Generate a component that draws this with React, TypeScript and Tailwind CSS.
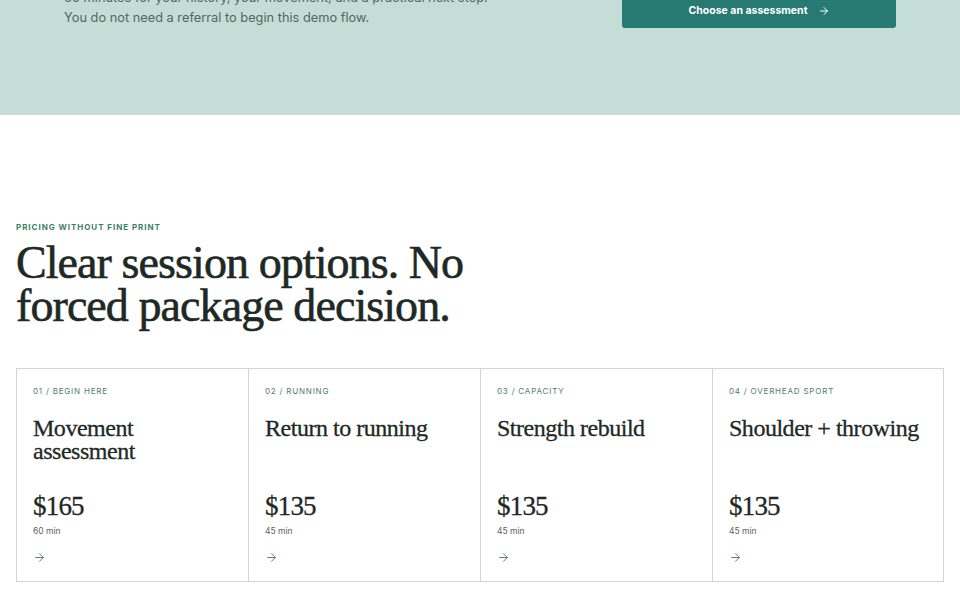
import { ArrowRight } from 'lucide-react';

const plans = [
    { tag: '01 / BEGIN HERE', title: 'Movement assessment', price: '$165', time: '60 min' },
    { tag: '02 / RUNNING', title: 'Return to running', price: '$135', time: '45 min' },
    { tag: '03 / CAPACITY', title: 'Strength rebuild', price: '$135', time: '45 min' },
    { tag: '04 / OVERHEAD SPORT', title: 'Shoulder + throwing', price: '$135', time: '45 min' },
];

const serif = { fontFamily: '"Liberation Serif", "DejaVu Serif", serif' };

export default function App() {
    return (
        <div className="w-[960px] h-[600px] overflow-hidden bg-white text-[#1f2a27]" style={{ fontFamily: 'Inter, "Noto Sans", sans-serif' }}>
            {/* Hero tail, page is scrolled so the top is cut off */}
            <section className="bg-[#c4ddd6] h-[115px] overflow-hidden">
                <div className="flex justify-between -mt-[12px]">
                    <div className="pl-[64px] text-[12.8px] leading-[20px] text-[#56675f]">
                        <p>60 minutes for your history, your movement, and a practical next step.</p>
                        <p>You do not need a referral to begin this demo flow.</p>
                    </div>
                    <div className="mr-[64px]">
                        <button className="w-[274px] h-[40px] pt-[6px] rounded-b-[3px] bg-[#267a72] text-white text-[10.5px] font-bold flex items-center justify-center gap-2.5">
                            Choose an assessment
                            <ArrowRight size={12} strokeWidth={2} />
                        </button>
                    </div>
                </div>
            </section>

            <main className="px-4 pt-[107px]">
                <p className="text-[8px] font-bold tracking-[0.12em] text-[#3f7d69] leading-[10px]">
                    PRICING WITHOUT FINE PRINT
                </p>
                <h2 className="mt-[9px] text-[46px] leading-[43px] tracking-[-0.02em] text-[#1e2926] w-[480px] [-webkit-text-stroke:0.6px_#1e2926]" style={serif}>
                    Clear session options. No forced package decision.
                </h2>

                <div className="mt-[41px] grid grid-cols-[231px_232px_232px_1fr] border border-[#d2d5d4]">
                    {plans.map((p, i) => (
                        <div key={p.tag} className={`h-[212px] px-[16px] pt-[17px] flex flex-col ${i > 0 ? 'border-l border-[#d2d5d4]' : ''}`}>
                            <p className="text-[8px] tracking-[0.1em] text-[#4f7d6e] leading-[10px]">{p.tag}</p>
                            <h3 className="mt-[21px] max-w-[192px] text-[24px] leading-[23px] tracking-[-0.02em] text-[#1e2926] h-[60px] [-webkit-text-stroke:0.3px_#1e2926]" style={serif}>
                                {p.title}
                            </h3>
                            <p className="mt-[14px] text-[27px] leading-[30px] tracking-[-0.03em] text-[#1e2926] [-webkit-text-stroke:0.3px_#1e2926]" style={serif}>
                                {p.price}
                            </p>
                            <p className="mt-[5px] text-[8.5px] text-[#5b625f] leading-[10px]">{p.time}</p>
                            <div className="mt-[15px] text-[#3f6f62]">
                                <ArrowRight size={13} strokeWidth={1.6} />
                            </div>
                        </div>
                    ))}
                </div>
            </main>
        </div>
    );
}
